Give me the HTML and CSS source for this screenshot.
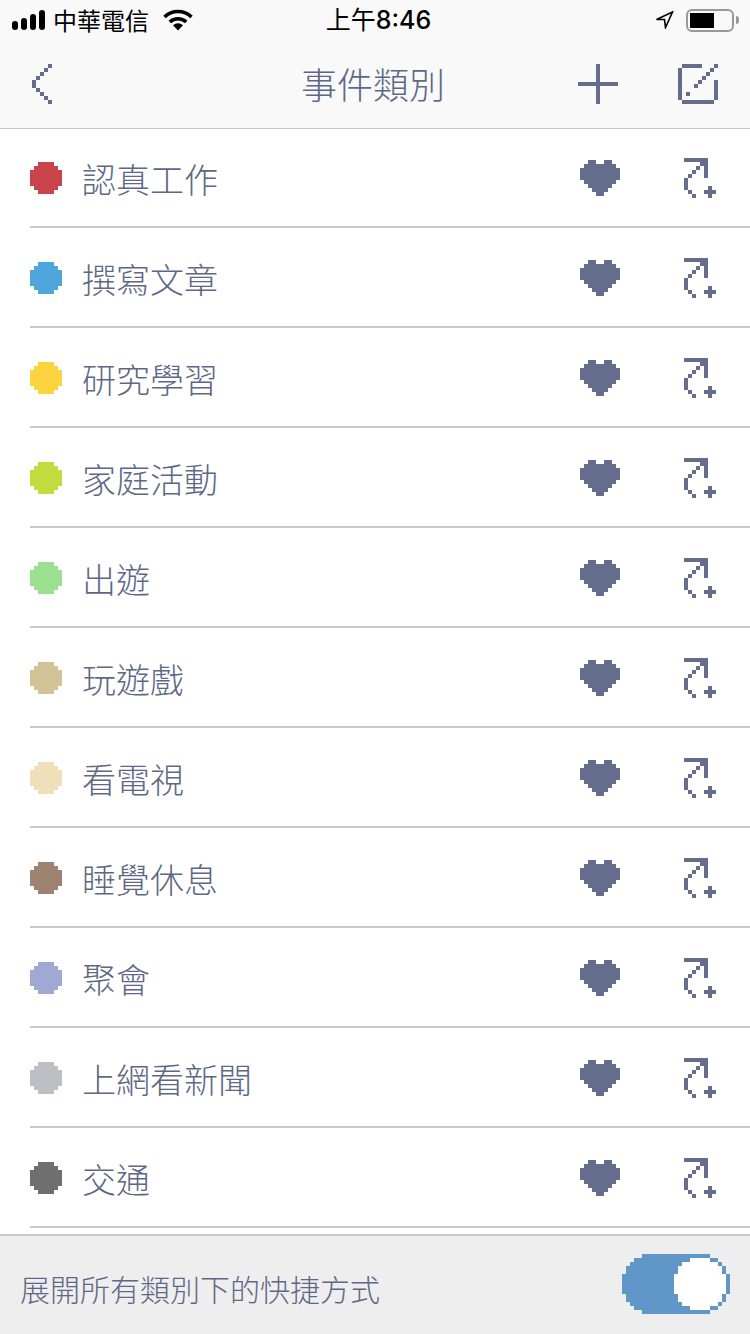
FILE: index.html

```html
<!DOCTYPE html>
<html lang="zh-Hant">
<head>
<meta charset="utf-8">
<title>事件類別</title>
<link rel="stylesheet" href="styles.css">
</head>

<body>
<svg class="defs" xmlns="http://www.w3.org/2000/svg">
    <symbol id="dot" viewBox="0 0 8 8"><path d="M2 0h4v1h1v1h1v4h-1v1h-1v1H2V7H1V6H0V2h1V1h1z"/></symbol>
    <symbol id="heart" viewBox="0 0 10 9"><path d="M2 0h2v1h2V0h2v1h1v1h1v3h-1v1h-1v1h-1v1h-1v1H4V8H3V7H2V6H1V5H0V2h1V1h1z"/></symbol>
    <symbol id="share" viewBox="0 0 8 10"><path d="M0 0h6v1H0zM4 1h2v1H4zM5 2h1v3H5zM3 2h1v1H3zM2 3h1v1H2zM1 4h1v1H1zM0 5h1v3H0zM1 8h1v1H1zM2 9h1v1H2zM6 7h1v3H6zM5 8h3v1H5z"/></symbol>
</svg>

<div class="status">
    <div class="status-left">
        <svg class="signal" viewBox="0 0 33 20"><rect x="0" y="11" width="6" height="9" rx="3"/><rect x="9" y="8" width="6" height="12" rx="3"/><rect x="18" y="4" width="6" height="16" rx="3"/><rect x="27" y="0" width="6" height="20" rx="3"/></svg>
        <span class="carrier">中華電信</span>
        <svg class="wifi" viewBox="0 0 30 22"><path d="M1.500 8a19.500 19.500 0 0 1 27 0" /><path d="M6.800 13a12 12 0 0 1 16.400 0"/><path class="wifi-tip" d="M10 16.200a7.500 7.500 0 0 1 10 0L15 21.500z"/></svg>
    </div>
    <div class="time">上午<span class="digits">8:46</span></div>
    <div class="status-right">
        <svg class="arrow" viewBox="0 0 19 18"><path d="M17.500 1 1.500 8.500H9.500L10.500 16.500z"/></svg>
        <div class="battery"><div class="battery-level"></div></div>
        <div class="battery-nub"></div>
    </div>
</div>

<div class="nav">
    <div class="nav-left">
        <svg class="back" viewBox="0 0 5 10"><path d="M4 0h1v1H4zM3 1h1v1H3zM2 2h1v1H2zM1 3h1v1H1zM0 4h1v2H0zM1 6h1v1H1zM2 7h1v1H2zM3 8h1v1H3zM4 9h1v1H4z"/></svg>
    </div>
    <div class="title">事件類別</div>
    <div class="nav-right">
        <svg class="add" viewBox="0 0 10 10"><path d="M4.500 0h1v10h-1zM0 4.500h10v1H0z"/></svg>
        <svg class="compose" viewBox="0 0 10 10"><path d="M1 0h5v1H1zM9 0h1v1H9zM0 1h1v8H0zM8 1h1v1H8zM7 2h1v1H7zM6 3h1v1H6zM5 4h1v1H5zM4 5h1v1H4zM9 4h1v5H9zM2 7h1v1H2zM1 9h8v1H1z"/></svg>
    </div>
</div>

<ul class="list">
    <li class="row"><svg class="dot c-work"><use href="#dot"/></svg><span class="name">認真工作</span><svg class="heart"><use href="#heart"/></svg><svg class="share"><use href="#share"/></svg></li>
    <li class="row"><svg class="dot c-write"><use href="#dot"/></svg><span class="name">撰寫文章</span><svg class="heart"><use href="#heart"/></svg><svg class="share"><use href="#share"/></svg></li>
    <li class="row"><svg class="dot c-study"><use href="#dot"/></svg><span class="name">研究學習</span><svg class="heart"><use href="#heart"/></svg><svg class="share"><use href="#share"/></svg></li>
    <li class="row"><svg class="dot c-family"><use href="#dot"/></svg><span class="name">家庭活動</span><svg class="heart"><use href="#heart"/></svg><svg class="share"><use href="#share"/></svg></li>
    <li class="row"><svg class="dot c-trip"><use href="#dot"/></svg><span class="name">出遊</span><svg class="heart"><use href="#heart"/></svg><svg class="share"><use href="#share"/></svg></li>
    <li class="row"><svg class="dot c-game"><use href="#dot"/></svg><span class="name">玩遊戲</span><svg class="heart"><use href="#heart"/></svg><svg class="share"><use href="#share"/></svg></li>
    <li class="row"><svg class="dot c-tv"><use href="#dot"/></svg><span class="name">看電視</span><svg class="heart"><use href="#heart"/></svg><svg class="share"><use href="#share"/></svg></li>
    <li class="row"><svg class="dot c-sleep"><use href="#dot"/></svg><span class="name">睡覺休息</span><svg class="heart"><use href="#heart"/></svg><svg class="share"><use href="#share"/></svg></li>
    <li class="row"><svg class="dot c-party"><use href="#dot"/></svg><span class="name">聚會</span><svg class="heart"><use href="#heart"/></svg><svg class="share"><use href="#share"/></svg></li>
    <li class="row"><svg class="dot c-news"><use href="#dot"/></svg><span class="name">上網看新聞</span><svg class="heart"><use href="#heart"/></svg><svg class="share"><use href="#share"/></svg></li>
    <li class="row"><svg class="dot c-traffic"><use href="#dot"/></svg><span class="name">交通</span><svg class="heart"><use href="#heart"/></svg><svg class="share"><use href="#share"/></svg></li>
</ul>

<div class="footer">
    <span class="footer-text">展開所有類別下的快捷方式</span>
    <svg class="toggle" viewBox="0 0 27 15">
        <path class="toggle-track" d="M5 0h17v1h2v1h1v1h1v2h1v5h-1v2h-1v1h-1v1h-2v1H5v-1H3v-1H2v-1H1v-2H0V5h1V3h1V2h1V1h2z"/>
        <path class="toggle-knob" d="M17 1h5v1h2v1h1v2h1v5h-1v2h-1v1h-2v1h-5v-1h-2v-1h-1v-2h-1V5h1V3h1V2h2z"/>
    </svg>
</div>

</body>
</html>
```

FILE: styles.css

```css
* {
  box-sizing: border-box;
}

html, body {
  margin: 0;
  height: 1334px;
  overflow: hidden;
}

body {
  display: flex;
  flex-direction: column;
  background: #fff;
  color: #5e6886;
  font-family: "Noto Sans CJK TC", "Noto Sans", sans-serif;
}

svg {
  display: block;
  flex: none;
  fill: #646e8c;
  shape-rendering: crispEdges;
}

.defs {
  display: none;
}

/* status bar */
.status {
  display: grid;
  grid-template-columns: 1fr auto 1fr;
  align-items: center;
  height: 40px;
  padding: 0 11px 0 12px;
  background: #f9f9f9;
  color: #000;
}

.status svg {
  fill: #000;
  shape-rendering: auto;
}

.status-left {
  display: flex;
  align-items: center;
}

.signal {
  width: 33px;
  height: 20px;
}

.carrier {
  margin-left: 8px;
  font-size: 24px;
  line-height: 40px;
}

.wifi {
  width: 30px;
  height: 22px;
  margin-left: 14px;
}

.status .wifi path {
  fill: none;
  stroke: #000;
  stroke-width: 3.6;
}

.status .wifi .wifi-tip {
  fill: #000;
  stroke: none;
}

.time {
  padding-left: 6px;
  font-family: Inter, "Noto Sans CJK TC", sans-serif;
  font-size: 25px;
  line-height: 40px;
}

.digits {
  font-weight: 500;
}

.status-right {
  display: flex;
  align-items: center;
  justify-content: flex-end;
}

.status .arrow {
  width: 19px;
  height: 18px;
  fill: none;
  stroke: #000;
  stroke-width: 1.6;
  margin-right: 12px;
}

.battery {
  width: 48px;
  height: 23px;
  padding: 2px;
  border: 2px solid #999;
  border-radius: 6px;
}

.battery-level {
  width: 24px;
  height: 15px;
  background: #000;
}

.battery-nub {
  width: 3px;
  height: 8px;
  margin-left: 2px;
  border-radius: 0 3px 3px 0;
  background: #999;
}

/* nav bar */
.nav {
  position: relative;
  display: grid;
  grid-template-columns: 1fr auto 1fr;
  align-items: center;
  height: 88px;
  padding: 0 32px;
  background: #f9f9f9;
  box-shadow: 0 1px 0 #c8c8c8;
}

.back {
  width: 20px;
  height: 40px;
}

.title {
  margin: -3px 0 0 -4px;
  font-size: 36px;
  font-weight: 300;
  line-height: 88px;
}

.nav-right {
  display: flex;
  justify-content: flex-end;
  gap: 60px;
}

.add,
.compose {
  width: 40px;
  height: 40px;
}

/* list */
.list {
  flex: 1;
  margin: 0;
  padding: 0;
  list-style: none;
}

.row {
  display: flex;
  align-items: center;
  height: 100px;
  margin-left: 30px;
  padding: 2px 34px 0 0;
  border-bottom: 2px solid #c8c8c8;
}

.dot {
  width: 32px;
  height: 32px;
}

.name {
  flex: 1;
  margin: 2px 0 0 20px;
  font-size: 34px;
  font-weight: 300;
  line-height: 48px;
}

.heart {
  width: 40px;
  height: 36px;
  margin-right: 64px;
}

.share {
  width: 32px;
  height: 40px;
}

.c-work { fill: #c9434a; }
.c-write { fill: #4ea6dc; }
.c-study { fill: #fdd33f; }
.c-family { fill: #c2dc3f; }
.c-trip { fill: #9be08f; }
.c-game { fill: #d2c298; }
.c-tv { fill: #efe0b9; }
.c-sleep { fill: #9d8370; }
.c-party { fill: #9fa9d3; }
.c-news { fill: #bcc0c4; }
.c-traffic { fill: #6f6f6f; }

/* footer */
.footer {
  display: flex;
  align-items: center;
  justify-content: space-between;
  height: 100px;
  padding: 0 20px 2px;
  border-top: 2px solid #c8c8c8;
  background: #eee;
}

.footer-text {
  margin-top: 8px;
  font-size: 30px;
  font-weight: 300;
  line-height: 44px;
}

.toggle {
  width: 108px;
  height: 60px;
}

.toggle-track {
  fill: #6196c8;
}

.toggle-knob {
  fill: #fff;
}
```
